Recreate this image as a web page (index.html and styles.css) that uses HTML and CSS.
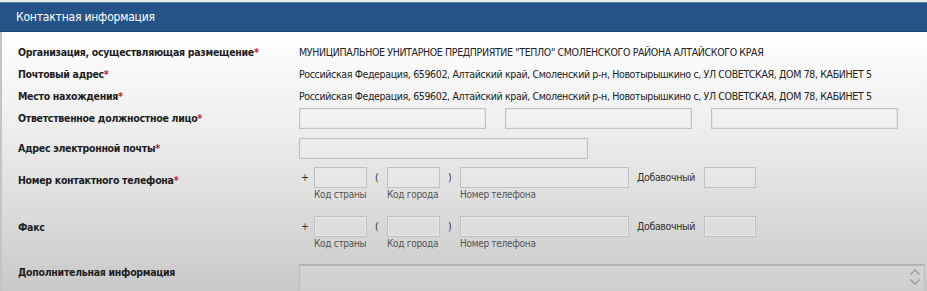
FILE: index.html
```html
<!DOCTYPE html>
<html lang="ru">
<head>
    <meta charset="UTF-8">
    <title>Контактная информация</title>
    <link rel="stylesheet" href="styles.css">
</head>
<body>
    <div class="panel">
        <div class="panel-title">Контактная информация</div>

        <div class="panel-body">
            <div class="row row-text">
                <div class="label">Организация, осуществляющая размещение<span class="req">*</span></div>
                <div class="value">МУНИЦИПАЛЬНОЕ УНИТАРНОЕ ПРЕДПРИЯТИЕ "ТЕПЛО" СМОЛЕНСКОГО РАЙОНА АЛТАЙСКОГО КРАЯ</div>
            </div>
            <div class="row row-text">
                <div class="label">Почтовый адрес<span class="req">*</span></div>
                <div class="value">Российская Федерация, 659602, Алтайский край, Смоленский р-н, Новотырышкино с, УЛ СОВЕТСКАЯ, ДОМ 78, КАБИНЕТ 5</div>
            </div>
            <div class="row row-text">
                <div class="label">Место нахождения<span class="req">*</span></div>
                <div class="value">Российская Федерация, 659602, Алтайский край, Смоленский р-н, Новотырышкино с, УЛ СОВЕТСКАЯ, ДОМ 78, КАБИНЕТ 5</div>
            </div>

            <div class="row row-person">
                <div class="label">Ответственное должностное лицо<span class="req">*</span></div>
                <div class="value fields">
                    <input class="field field-name" type="text">
                    <input class="field field-name" type="text">
                    <input class="field field-name" type="text">
                </div>
            </div>

            <div class="row row-email">
                <div class="label">Адрес электронной почты<span class="req">*</span></div>
                <div class="value">
                    <input class="field field-email" type="text">
                </div>
            </div>

            <div class="row row-phone">
                <div class="label">Номер контактного телефона<span class="req">*</span></div>
                <div class="value phone">
                    <span class="sym sym-plus">+</span>
                    <div class="part">
                        <input class="field field-code" type="text">
                        <span class="hint">Код страны</span>
                    </div>
                    <span class="sym">(</span>
                    <div class="part">
                        <input class="field field-code" type="text">
                        <span class="hint">Код города</span>
                    </div>
                    <span class="sym">)</span>
                    <div class="part">
                        <input class="field field-number" type="text">
                        <span class="hint">Номер телефона</span>
                    </div>
                    <span class="ext">Добавочный</span>
                    <div class="part">
                        <input class="field field-ext" type="text">
                    </div>
                </div>
            </div>

            <div class="row row-fax">
                <div class="label">Факс</div>
                <div class="value phone">
                    <span class="sym sym-plus">+</span>
                    <div class="part">
                        <input class="field field-code" type="text">
                        <span class="hint">Код страны</span>
                    </div>
                    <span class="sym">(</span>
                    <div class="part">
                        <input class="field field-code" type="text">
                        <span class="hint">Код города</span>
                    </div>
                    <span class="sym">)</span>
                    <div class="part">
                        <input class="field field-number" type="text">
                        <span class="hint">Номер телефона</span>
                    </div>
                    <span class="ext">Добавочный</span>
                    <div class="part">
                        <input class="field field-ext" type="text">
                    </div>
                </div>
            </div>

            <div class="row row-extra">
                <div class="label">Дополнительная информация</div>
                <div class="value">
                    <div class="textarea">
                        <div class="scroll">
                            <svg width="12" height="8" viewBox="0 0 12 8"><path d="M1.5 6.5 L6 2 L10.5 6.5" fill="none" stroke="#9a9a9a" stroke-width="1.4"/></svg>
                            <svg width="12" height="8" viewBox="0 0 12 8"><path d="M1.5 1.5 L6 6 L10.5 1.5" fill="none" stroke="#9a9a9a" stroke-width="1.4"/></svg>
                        </div>
                    </div>
                </div>
            </div>
        </div>
    </div>
</body>
</html>
```

FILE: styles.css
```css
* {
    margin: 0;
    padding: 0;
    box-sizing: border-box;
}

body {
    font-family: "DejaVu Sans", Verdana, sans-serif;
    font-size: 10.5px;
    color: #222;
    background: #c9c9c9;
    overflow: hidden;
}

.panel {
    padding-top: 2px;
    background: #e9eaeb;
    height: 291px;
}

.panel-title {
    height: 30px;
    line-height: 29px;
    padding-left: 16px;
    background: #245487;
    border-top: 1px solid #5b7ea3;
    border-bottom: 1px solid #1d4470;
    color: #fff;
    font-size: 12px;
    font-stretch: condensed;
    letter-spacing: -0.2px;
}

.panel-body {
    height: 259px;
    padding: 9px 0 0 16px;
    background: linear-gradient(180deg, #ffffff 0%, #f1f1f1 30%, #dedede 65%, #c9c9c9 100%);
    border-left: 2px solid #c4c4c4;
}

.row {
    display: grid;
    grid-template-columns: 281px 1fr;
    align-items: center;
}

.label {
    font-weight: bold;
    font-stretch: condensed;
    color: #1e1e1e;
    letter-spacing: -0.3px;
}

.req {
    color: #b52a2a;
}

.value {
    font-stretch: condensed;
    color: #222;
    letter-spacing: -0.35px;
}

.row-text {
    height: 22px;
}

.row-person {
    margin-top: -2px;
    height: 26px;
}

.row-email {
    margin-top: 4px;
    height: 26px;
}

.fields {
    display: flex;
    gap: 19px;
}

.field {
    display: block;
    height: 21px;
    border: 1px solid #c2c2c2;
    box-shadow: inset 0 0 0 1px #e6e6e6;
    background: rgba(255, 255, 255, 0.15);
    outline: none;
}

.field-name {
    width: 187px;
}

.field-email {
    width: 289px;
}

.row-phone,
.row-fax {
    align-items: start;
}

.row-phone {
    margin-top: 6px;
    height: 49px;
}

.row-fax {
    height: 49px;
}

.row-phone .label {
    padding-top: 7px;
}

.row-fax .label {
    padding-top: 5px;
}

.phone {
    display: flex;
    align-items: flex-start;
}

.part {
    display: flex;
    flex-direction: column;
}

.sym {
    width: 20px;
    padding-left: 8px;
    line-height: 20px;
    color: #333;
}

.sym-plus {
    width: 15px;
    padding-left: 2px;
}

.hint {
    font-size: 10px;
    color: #555;
    margin-top: 1px;
    letter-spacing: -0.3px;
}

.field-code {
    width: 53px;
}

.field-number {
    width: 169px;
}

.ext {
    padding: 0 0 0 8px;
    width: 75px;
    line-height: 20px;
    color: #333;
}

.field-ext {
    width: 52px;
}

.row-extra {
    margin-top: 0;
    align-items: start;
}

.row-extra .label {
    padding-top: 1px;
}

.textarea {
    position: relative;
    height: 40px;
    width: 626px;
    margin-top: -1px;
    border: 1px solid #bdbdbd;
    border-top: 2px solid #b4b4b4;
    background: rgba(255, 255, 255, 0.1);
}

.scroll {
    position: absolute;
    right: 1px;
    top: 0;
    width: 16px;
    display: flex;
    flex-direction: column;
    align-items: center;
    gap: 2px;
    padding-top: 2px;
}
```
